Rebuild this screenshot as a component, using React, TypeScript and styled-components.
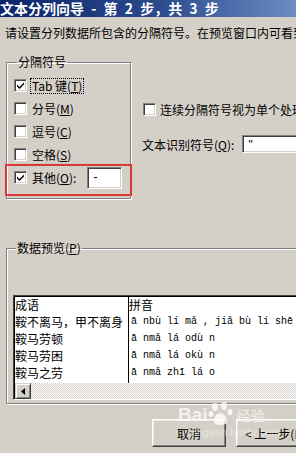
import styled, { createGlobalStyle } from 'styled-components';

const GlobalStyle = createGlobalStyle`
  html, body {
    margin: 0;
    padding: 0;
    background: #d4d0c8;
  }
  body {
    font-family: "Noto Sans CJK SC", "Liberation Sans", sans-serif;
    font-size: 12px;
    color: #000;
  }
`;

const Window = styled.div`
  position: relative;
  width: 296px;
  height: 453px;
  overflow: hidden;
  background: #d4d0c8;
`;

const TitleBar = styled.div`
  height: 17px;
  display: flex;
  align-items: center;
  background: linear-gradient(to right, #0a246a 0%, #2c4c8e 55%, #6c8cc4 100%);
  color: #fff;
  font-weight: bold;
  font-size: 14px;
  line-height: 17px;
  word-spacing: 4px;
  white-space: pre;
  overflow: hidden;
`;

const Instruction = styled.div`
  margin: 8px 0 0 5px;
  line-height: 16px;
  white-space: nowrap;
`;

const TopRow = styled.div`
  display: flex;
  margin-top: 14px;
`;

const GroupBox = styled.fieldset<{ $width: number }>`
  box-sizing: border-box;
  flex: none;
  width: ${p => p.$width}px;
  margin: 0 0 0 6px;
  padding: 5px 0 9px 7px;
  border: 1px solid #808080;
  box-shadow: inset 1px 1px #fff, 1px 1px #fff;
  min-width: 0;
`;

const Legend = styled.legend`
  padding: 0 1px;
  margin-left: 3px;
  line-height: 14px;
`;

const OptionRow = styled.div<{ $marked?: boolean }>`
  position: relative;
  display: flex;
  align-items: center;
  height: 23px;
  gap: 5px;
  white-space: nowrap;
  ${p =>
    p.$marked &&
    `
    &::after {
      content: '';
      position: absolute;
      left: -9px;
      right: -2px;
      top: -2px;
      bottom: -7px;
      border: 2px solid #d43c3c;
      box-shadow: 0 0 1px #e88;
      pointer-events: none;
    }
  `}
`;

const Box = styled.span`
  box-sizing: border-box;
  flex: none;
  width: 13px;
  height: 13px;
  background: #fff;
  border: 1px solid;
  border-color: #808080 #fff #fff #808080;
  box-shadow: inset 1px 1px #404040, inset -1px -1px #d4d0c8;
  display: flex;
  align-items: center;
  justify-content: center;
`;

const Focus = styled.span`
  border: 1px dotted #000;
  padding: 0 1px;
  margin-left: -2px;
  line-height: 14px;
`;

const Key = styled.u`
  text-decoration: underline;
`;

const Field = styled.div<{ $width: number; $height: number }>`
  box-sizing: border-box;
  width: ${p => p.$width}px;
  height: ${p => p.$height}px;
  background: #fff;
  border: 1px solid;
  border-color: #808080 #fff #fff #808080;
  box-shadow: inset 1px 1px #404040, inset -1px -1px #d4d0c8;
  padding: 2px 0 0 5px;
  font-family: "Liberation Sans", sans-serif;
  font-size: 12px;
  line-height: 14px;
  flex: none;
`;

const RightColumn = styled.div`
  display: flex;
  flex-direction: column;
  margin-left: 12px;
  white-space: nowrap;
`;

const RightRow = styled.div<{ $top: number }>`
  display: flex;
  align-items: center;
  gap: 4px;
  margin-top: ${p => p.$top}px;
`;

const PreviewGroup = styled.fieldset`
  box-sizing: border-box;
  width: 320px;
  margin: 42px 0 0 6px;
  padding: 40px 0 3px 6px;
  border: 1px solid #808080;
  box-shadow: inset 1px 1px #fff, 1px 1px #fff;
  min-width: 0;
`;

const PreviewBox = styled.div`
  border: 1px solid;
  border-color: #404040 #fff #fff #404040;
  box-shadow: inset 1px 1px #000;
  background: #fff;
  padding: 1px 0 0 1px;
`;

const Table = styled.div`
  display: grid;
  grid-template-columns: 113px 1px 1fr;
  height: 86px;
  overflow: hidden;
`;

const Cell = styled.div<{ $mono?: boolean }>`
  line-height: 16.7px;
  white-space: nowrap;
  font-family: ${p =>
    p.$mono ? '"Liberation Mono", "Noto Sans CJK SC", monospace' : '"Noto Sans CJK SC", sans-serif'};
  font-size: ${p => (p.$mono ? '10px' : '12px')};
  padding-left: ${p => (p.$mono ? '2px' : '0')};
`;

const Divider = styled.div`
  background: #000;
  grid-row: 1 / span 6;
  grid-column: 2;
`;

const Scrollbar = styled.div`
  display: flex;
  height: 16px;
  background: repeating-conic-gradient(#fff 0 25%, #d4d0c8 0 50%) 0 0 / 2px 2px;
`;

const ArrowButton = styled.div`
  box-sizing: border-box;
  width: 16px;
  height: 16px;
  background: #d4d0c8;
  border: 1px solid;
  border-color: #d4d0c8 #404040 #404040 #d4d0c8;
  box-shadow: inset 1px 1px #fff, inset -1px -1px #808080;
  display: flex;
  align-items: center;
  justify-content: center;
`;

const ButtonRow = styled.div`
  display: flex;
  gap: 10px;
  margin: 15px 0 0 152px;
`;

const Button = styled.div<{ $inset?: number }>`
  box-sizing: border-box;
  flex: none;
  width: 74px;
  height: 28px;
  background: #d4d0c8;
  border: 1px solid;
  border-color: #fff #404040 #404040 #fff;
  box-shadow: inset -1px -1px #808080, inset 1px 1px #e8e6e0;
  display: flex;
  align-items: center;
  justify-content: ${p => (p.$inset ? 'flex-start' : 'center')};
  padding-left: ${p => p.$inset ?? 0}px;
  font-size: 12px;
  white-space: pre;
  overflow: hidden;
`;

const Watermark = styled.div`
  position: absolute;
  left: 178px;
  top: 402px;
  color: rgba(255, 255, 255, 0.7);
  pointer-events: none;
  display: flex;
  flex-direction: column;
  align-items: flex-start;
`;

const MarkLine = styled.div`
  display: flex;
  align-items: flex-end;
  font-family: "Liberation Sans", sans-serif;
  font-weight: bold;
  font-size: 19px;
  line-height: 22px;
`;

const MarkCn = styled.span`
  font-family: "Noto Sans CJK SC", sans-serif;
  font-weight: normal;
  font-size: 14px;
  margin-left: 3px;
`;

const MarkUrl = styled.div`
  font-family: "Liberation Sans", sans-serif;
  font-size: 11px;
  margin-left: 14px;
  color: rgba(255, 255, 255, 0.45);
`;

const Check = () => (
  <svg width="9" height="9" viewBox="0 0 9 9">
    <path d="M1 3.5 L3.5 6 L8 1.5 L8 3.5 L3.5 8 L1 5.5 Z" fill="#000" />
  </svg>
);

const CheckBox = ({ checked }: { checked?: boolean }) => <Box>{checked && <Check />}</Box>;

const Paw = () => (
  <svg width="26" height="24" viewBox="0 0 26 24">
    <g fill="rgba(255,255,255,0.8)">
      <ellipse cx="7" cy="5" rx="3" ry="4" />
      <ellipse cx="16" cy="4" rx="3" ry="4" />
      <ellipse cx="3" cy="12" rx="2.5" ry="3" />
      <ellipse cx="22" cy="10" rx="2.5" ry="3" />
      <path d="M6 20 C6 13 10 11 12 11 C15 11 19 14 19 20 C19 24 6 24 6 20 Z" />
    </g>
  </svg>
);

const rows = [
  ['成语', '拼音'],
  ['鞍不离马，甲不离身', 'ā nbù lí mǎ , jiǎ bù lí shē n'],
  ['鞍马劳顿', 'ā nmǎ lá odù n'],
  ['鞍马劳困', 'ā nmǎ lá okù n'],
  ['鞍马之劳', 'ā nmǎ zhī lá o'],
];

export default function App() {
  return (
    <Window>
      <GlobalStyle />
      <TitleBar>文本分列向导 - 第 2 步，共 3 步</TitleBar>
      <Instruction>请设置分列数据所包含的分隔符号。在预览窗口内可看到分列的效果。</Instruction>

      <TopRow>
        <GroupBox $width={125}>
          <Legend>分隔符号</Legend>
          <OptionRow>
            <CheckBox checked />
            <Focus>
              Tab 键(<Key>T</Key>)
            </Focus>
          </OptionRow>
          <OptionRow>
            <CheckBox />
            <span>
              分号(<Key>M</Key>)
            </span>
          </OptionRow>
          <OptionRow>
            <CheckBox />
            <span>
              逗号(<Key>C</Key>)
            </span>
          </OptionRow>
          <OptionRow>
            <CheckBox />
            <span>
              空格(<Key>S</Key>)
            </span>
          </OptionRow>
          <OptionRow $marked>
            <CheckBox checked />
            <span>
              其他(<Key>O</Key>):
            </span>
            <Field $width={35} $height={22} style={{ marginLeft: 6 }}>
              -
            </Field>
          </OptionRow>
        </GroupBox>

        <RightColumn>
          <RightRow $top={46}>
            <CheckBox />
            <span>连续分隔符号视为单个处理(R)</span>
          </RightRow>
          <RightRow $top={17}>
            <span style={{ marginLeft: -1 }}>
              文本识别符号(<Key>Q</Key>):
            </span>
            <Field $width={90} $height={18} style={{ marginLeft: 4 }}>
              "
            </Field>
          </RightRow>
        </RightColumn>
      </TopRow>

      <PreviewGroup>
        <Legend>
          数据预览(<Key>P</Key>)
        </Legend>
        <PreviewBox>
          <Table>
            <Divider />
            {rows.map(([a, b]) => [
              <Cell key={a} style={{ gridColumn: 1 }}>
                {a}
              </Cell>,
              <Cell key={a + b} $mono={b !== '拼音'} style={{ gridColumn: 3 }}>
                {b}
              </Cell>,
            ])}
          </Table>
          <Scrollbar>
            <ArrowButton>
              <svg width="4" height="7" viewBox="0 0 4 7">
                <path d="M4 0 L0 3.5 L4 7 Z" fill="#000" />
              </svg>
            </ArrowButton>
          </Scrollbar>
        </PreviewBox>
      </PreviewGroup>

      <ButtonRow>
        <Button>取消</Button>
        <Button $inset={8}>{'< 上一步(B)'}</Button>
      </ButtonRow>

      <Watermark>
        <MarkLine>
          Bai
          <Paw />
          <MarkCn>经验</MarkCn>
        </MarkLine>
        <MarkUrl>jingyan.baidu.com</MarkUrl>
      </Watermark>
    </Window>
  );
}
